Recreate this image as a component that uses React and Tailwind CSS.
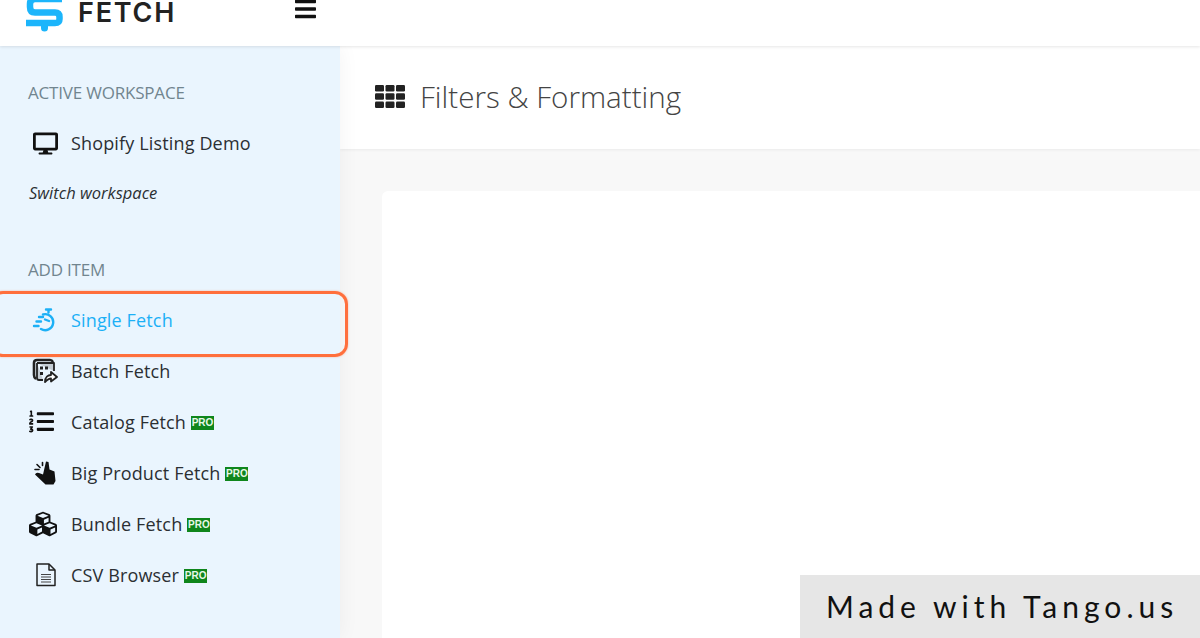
import { FaBars, FaCubes, FaDesktop, FaListOl } from "react-icons/fa";

const ITEMS = [
  { label: "Batch Fetch", icon: <BatchIcon /> },
  { label: "Catalog Fetch", icon: <FaListOl className="ml-[-3px] h-[25px] w-[25px]" />, pro: true },
  { label: "Big Product Fetch", icon: <HandIcon />, pro: true },
  { label: "Bundle Fetch", icon: <FaCubes className="ml-[-3px] h-[28px] w-[28px]" />, pro: true },
  { label: "CSV Browser", icon: <FileIcon />, pro: true },
];

function Logo() {
  return (
    <svg width="40" height="32" viewBox="0 0 40 32" fill="none" stroke="#1cb5fb" strokeWidth="6.500">
      <path d="M37 -1H10Q5 -1 5 4V7Q5 12.500 10 12.500H30Q34.500 12.500 34.500 17V19Q34.500 23 30 23H1" />
      <path d="M19.500 25V28" strokeWidth="7" strokeLinecap="round" />
    </svg>
  );
}

function GridIcon() {
  const cells = [0, 1, 2, 3, 4, 5, 6, 7, 8];
  return (
    <svg width="30" height="23" viewBox="0 0 30 23" fill="#222">
      {cells.map((i) => (
        <rect key={i} x={(i % 3) * 10.500} y={Math.floor(i / 3) * 8.250} width="9" height="6.500" rx="1.200" />
      ))}
    </svg>
  );
}

function TimerIcon() {
  return (
    <svg width="26" height="24" viewBox="0 0 26 24" fill="none" stroke="#1cb0f6" strokeWidth="2.400" strokeLinecap="round" className="ml-[4px]">
      <path d="M11 6.500A8 8 0 1 1 9 21" />
      <path d="M14 1.500H19M16.500 1.500V4.500M17 13L13 11.500" />
      <path d="M7 9H11M4.500 13.500H9M2 18H6.500" />
    </svg>
  );
}

function BatchIcon() {
  return (
    <svg width="26" height="26" viewBox="0 0 26 26" fill="none" stroke="#222" strokeWidth="1.800" strokeLinejoin="round">
      <path d="M4 21C2.500 20 2 19 2 17V5Q2 2 5 2H18Q20 2 21 4" strokeWidth="2.600" />
      <path d="M5 5H22V13M5 5V20Q5 22 7 22H11" fill="#555" fillOpacity="0.25" />
      <path d="M8 8.500H11V11.500H8ZM13 8.500H16V11.500H13ZM8 14H11V17H8Z" fill="#222" stroke="none" />
      <path d="M13 24C13 19 16 17 19 17V14L25 19L19 23.500V20.500C17 20.500 15 22 13 24Z" fill="#fff" />
    </svg>
  );
}

function HandIcon() {
  return (
    <svg width="26" height="24" viewBox="0 0 26 24" fill="#111">
      <path d="M14 0.500L16.500 1L17.500 8.500L22.500 10.500L23.500 20L21.500 23.500H13.500L3 13.500Q4 11 7 12L11 13.500Z" />
      <g stroke="#111" strokeWidth="1.600" strokeLinecap="round">
        <path d="M3 8.500H7M5 3.500L8 6.500M10.500 1.500V4.500" />
      </g>
    </svg>
  );
}

function FileIcon() {
  return (
    <svg width="22" height="24" viewBox="0 0 22 24" fill="none" stroke="#222" strokeWidth="1.500" strokeLinejoin="round" className="ml-[3px]">
      <path d="M2 1H14L20 7V22.500H2Z" />
      <path d="M14 1V7H20" />
      <path d="M6 11.500H16M6 14H16M6 16.500H16M6 19H16" strokeWidth="1.200" stroke="#444" />
    </svg>
  );
}

function Pro() {
  return (
    <span className="ml-[5px] mt-[3px] flex h-[14px] w-[23px] items-center justify-center bg-[#0f861c] font-['Liberation_Sans',sans-serif] text-[10px] font-bold leading-none text-[#e8f8e8]">
      PRO
    </span>
  );
}

function Row({ icon, label, pro, active }) {
  return (
    <div className={`flex h-[51px] items-center ${active ? "text-[#1cb0f6]" : "text-[#2b2f33]"}`}>
      <span className="flex w-[43px] shrink-0 items-center text-[#111]">{icon}</span>
      <span className="text-[18px] leading-none tracking-[0.15px]">{label}</span>
      {pro && <Pro />}
    </div>
  );
}

export default function App() {
  return (
    <div className="relative flex h-[638px] w-[1200px] flex-col overflow-hidden bg-white font-['Open_Sans',sans-serif]">
      {/* Top bar */}
      <header className="z-20 flex h-[46px] shrink-0 items-start bg-white pl-[25px] shadow-[0_1px_3px_rgba(0,0,0,0.1)]">
        <Logo />
        <span className="ml-[13px] mt-[1px] font-['Inter',sans-serif] text-[27px] font-semibold leading-[24px] tracking-[1.800px] text-[#222]">FETCH</span>
        <FaBars className="ml-[118px] mt-[-3px] h-[24px] w-[23px] text-[#111]" />
      </header>

      <div className="flex min-h-0 flex-1">
        {/* Sidebar */}
        <aside className="z-10 w-[340px] shrink-0 bg-[#eaf5fe] pl-[28px] pt-[36px] shadow-[0_0_20px_rgba(0,0,0,0.05)]">
          <h3 className="text-[17px] leading-[22px] tracking-[-0.2px] text-[#71858f]">ACTIVE WORKSPACE</h3>
          <div className="mt-[21px] flex h-[36px] items-center text-[#2b2f33]">
            <span className="flex w-[43px] shrink-0 pl-[5px]"><FaDesktop className="h-[23px] w-[25px] text-[#111]" /></span>
            <span className="text-[18px] leading-none tracking-[0.15px]">Shopify Listing Demo</span>
          </div>
          <p className="mt-[21px] pl-[1px] text-[16.500px] italic leading-[22px] text-[#2b2f33]">Switch workspace</p>
          <h3 className="mt-[55px] text-[17px] leading-[22px] tracking-[-0.2px] text-[#71858f]">ADD ITEM</h3>
          <div className="mt-[13px]">
            <Row icon={<TimerIcon />} label="Single Fetch" active />
            {ITEMS.map((item) => (
              <Row key={item.label} icon={<span className="pl-[4px]">{item.icon}</span>} label={item.label} pro={item.pro} />
            ))}
          </div>
        </aside>

        {/* Main */}
        <main className="flex min-w-0 flex-1 flex-col bg-[#f8f8f8]">
          <div className="z-[5] flex h-[103px] shrink-0 items-center bg-white pb-[2px] pl-[35px] shadow-[0_1px_3px_rgba(0,0,0,0.06)]">
            <GridIcon />
            <h1 className="ml-[15px] text-[29.600px] font-light leading-none text-[#444]">Filters &amp; Formatting</h1>
          </div>
          <div className="flex-1 pl-[42px] pt-[42px]">
            <div className="h-full rounded-tl-[6px] bg-white" />
          </div>
        </main>
      </div>

      {/* Highlight around the clicked item */}
      <div className="absolute left-[-10px] top-[291px] z-30 h-[66px] w-[358px] rounded-[13px] border-[3px] border-[#ff6f3c] shadow-[0_0_2px_rgba(255,111,60,0.5)]" />

      {/* Watermark */}
      <div className="absolute bottom-0 right-0 z-30 flex h-[63px] w-[400px] items-center bg-[#e6e6e6] pl-[26px] font-['Lato',sans-serif] text-[30px] tracking-[5px] text-[#111]">
        Made with Tango.us
      </div>
    </div>
  );
}
